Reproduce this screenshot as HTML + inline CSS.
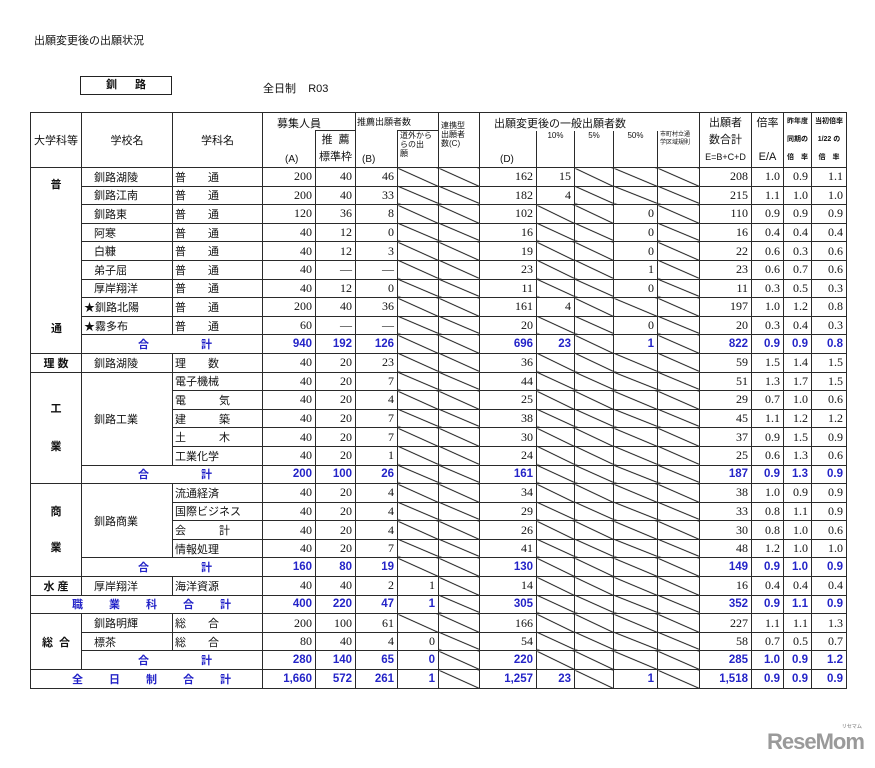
<!DOCTYPE html>
<html><head><meta charset="utf-8">
<style>
body{margin:0;background:#fff;width:875px;height:768px;position:relative;overflow:hidden;font-family:"Liberation Serif","Noto Serif CJK JP",serif;color:#111}
.title{position:absolute;left:34px;top:32px;font-size:11px;font-family:"Liberation Sans","Noto Sans CJK JP",sans-serif}
.box{position:absolute;left:80px;top:76px;width:90px;height:17px;border:1px solid #222;font-size:11px;font-weight:bold;text-align:center;line-height:17px;font-family:"Liberation Sans","Noto Sans CJK JP",sans-serif;letter-spacing:18px;text-indent:18px}
.sub{position:absolute;left:263px;top:80px;font-size:11px;font-family:"Liberation Sans","Noto Sans CJK JP",sans-serif}
.logo{position:absolute;left:767px;top:729px;font:bold 22px "Liberation Sans",sans-serif;color:#9a9a9a;letter-spacing:-1px}
.logo small{position:absolute;right:2px;top:-6px;font-size:5px;letter-spacing:0}
table{position:absolute;left:30px;top:112px;border-collapse:collapse;table-layout:fixed;width:816px;font-size:11px}
td,th{border:1px solid #2a2a2a;padding:0 2px;white-space:nowrap;overflow:visible;font-weight:normal}
tbody tr{height:18.6px}
th{font-family:"Liberation Sans","Noto Sans CJK JP",sans-serif;font-size:10px;position:relative;vertical-align:middle}
.n{text-align:right;font-size:12px;padding-right:3px}
.d{background:linear-gradient(to top right,transparent calc(50% - 0.9px),#000 50%,transparent calc(50% + 0.9px))}
.t td{color:#2424c8;font-weight:bold;font-family:"Liberation Sans","Noto Sans CJK JP",sans-serif}
.t td.n{font-size:11.5px}
.j{font-family:"Liberation Sans","Noto Sans CJK JP",sans-serif;font-size:11px}
.c1{text-align:center;font-weight:bold;font-family:"Liberation Sans","Noto Sans CJK JP",sans-serif;font-size:11px}
.sc{padding-left:12px}
.ab{position:absolute;white-space:nowrap}
.sm{font-size:8px;line-height:9px}
.g{padding-left:56px}
.g span{padding-left:52px}
.w{padding-left:41px}
.w span{padding-left:26px}
</style></head><body>
<div class="title">出願変更後の出願状況</div>
<div class="box">釧路</div>
<div class="sub">全日制&nbsp;&nbsp;&nbsp;&nbsp;R03</div>
<div class="logo">ReseMom<small>リセマム</small></div>
<table>
<colgroup><col style="width:51px"><col style="width:91px"><col style="width:90px"><col style="width:53px"><col style="width:40px"><col style="width:42px"><col style="width:41px"><col style="width:41px"><col style="width:57px"><col style="width:38px"><col style="width:39px"><col style="width:44px"><col style="width:42px"><col style="width:52px"><col style="width:32px"><col style="width:28px"><col style="width:35px"></colgroup>
<thead>
<tr style="height:18px">
<th rowspan="2" style="font-size:11px">大学科等</th>
<th rowspan="2" style="font-size:11px">学校名</th>
<th rowspan="2" style="font-size:11px">学科名</th>
<th rowspan="2" style="border-right:none"><span class="ab" style="left:14px;top:2px;font-size:11px">募集人員</span><span class="ab" style="left:22px;bottom:2px">(A)</span></th>
<th style="border-left:none"></th>
<th rowspan="2" style="border-right:none"><span class="ab" style="left:1px;top:2px;font-size:9px">推薦出願者数</span><span class="ab" style="left:6px;bottom:2px">(B)</span></th>
<th style="border-left:none"></th>
<th rowspan="2" style="vertical-align:top;text-align:left"><div class="sm" style="margin-top:8px">連携型<br>出願者<br>数(C)</div></th>
<th rowspan="2" style="border-right:none"><span class="ab" style="left:14px;top:2px;font-size:11px">出願変更後の一般出願者数</span><span class="ab" style="left:20px;bottom:2px">(D)</span></th>
<th style="border:none;border-top:1px solid #2a2a2a"></th>
<th style="border:none;border-top:1px solid #2a2a2a"></th>
<th style="border:none;border-top:1px solid #2a2a2a"></th>
<th style="border-left:none;border-bottom:none"></th>
<th rowspan="2" style="font-size:11px;line-height:17px">出願者<br>数合計<br><span style="font-size:9px">E=B+C+D</span></th>
<th rowspan="2" style="font-size:11px;vertical-align:top;line-height:17px;padding-top:2px">倍率<br><br>E/A</th>
<th rowspan="2" class="sm" style="font-size:7px;line-height:18px;padding:0;font-weight:bold">昨年度<br>同期の<br>倍　率</th>
<th rowspan="2" class="sm" style="font-size:7px;line-height:18px;padding:0;font-weight:bold">当初倍率<br>1/22 の<br>倍　率</th>
</tr>
<tr style="height:37px">
<th style="font-size:11px;line-height:17px">推&nbsp;&nbsp;薦<br>標準枠</th>
<th style="text-align:left;vertical-align:top"><div class="sm">道外から<br>らの出<br>願</div></th>
<th style="vertical-align:top;font-size:8px;border-top:none">10%</th>
<th style="vertical-align:top;font-size:8px;border-top:none">5%</th>
<th style="vertical-align:top;font-size:8px;border-top:none">50%</th>
<th style="vertical-align:top;font-size:6px;line-height:8px;text-align:left;border-top:none">市町村立通<br>学区域規則</th>
</tr>
</thead>
<tbody>
<tr><td rowspan="10" class="c1" style="vertical-align:top;padding-top:8px;position:relative">普<span class="ab" style="left:20px;top:152px">通</span></td><td class="sc j">釧路湖陵</td><td class="j">普&emsp;&emsp;通</td><td class="n">200</td><td class="n">40</td><td class="n">46</td><td class="d"></td><td class="d"></td><td class="n">162</td><td class="n">15</td><td class="d"></td><td class="d"></td><td class="d"></td><td class="n">208</td><td class="n">1.0</td><td class="n">0.9</td><td class="n">1.1</td></tr>
<tr><td class="sc j">釧路江南</td><td class="j">普&emsp;&emsp;通</td><td class="n">200</td><td class="n">40</td><td class="n">33</td><td class="d"></td><td class="d"></td><td class="n">182</td><td class="n">4</td><td class="d"></td><td class="d"></td><td class="d"></td><td class="n">215</td><td class="n">1.1</td><td class="n">1.0</td><td class="n">1.0</td></tr>
<tr><td class="sc j">釧路東</td><td class="j">普&emsp;&emsp;通</td><td class="n">120</td><td class="n">36</td><td class="n">8</td><td class="d"></td><td class="d"></td><td class="n">102</td><td class="d"></td><td class="d"></td><td class="n">0</td><td class="d"></td><td class="n">110</td><td class="n">0.9</td><td class="n">0.9</td><td class="n">0.9</td></tr>
<tr><td class="sc j">阿寒</td><td class="j">普&emsp;&emsp;通</td><td class="n">40</td><td class="n">12</td><td class="n">0</td><td class="d"></td><td class="d"></td><td class="n">16</td><td class="d"></td><td class="d"></td><td class="n">0</td><td class="d"></td><td class="n">16</td><td class="n">0.4</td><td class="n">0.4</td><td class="n">0.4</td></tr>
<tr><td class="sc j">白糠</td><td class="j">普&emsp;&emsp;通</td><td class="n">40</td><td class="n">12</td><td class="n">3</td><td class="d"></td><td class="d"></td><td class="n">19</td><td class="d"></td><td class="d"></td><td class="n">0</td><td class="d"></td><td class="n">22</td><td class="n">0.6</td><td class="n">0.3</td><td class="n">0.6</td></tr>
<tr><td class="sc j">弟子屈</td><td class="j">普&emsp;&emsp;通</td><td class="n">40</td><td class="n">―</td><td class="n">―</td><td class="d"></td><td class="d"></td><td class="n">23</td><td class="d"></td><td class="d"></td><td class="n">1</td><td class="d"></td><td class="n">23</td><td class="n">0.6</td><td class="n">0.7</td><td class="n">0.6</td></tr>
<tr><td class="sc j">厚岸翔洋</td><td class="j">普&emsp;&emsp;通</td><td class="n">40</td><td class="n">12</td><td class="n">0</td><td class="d"></td><td class="d"></td><td class="n">11</td><td class="d"></td><td class="d"></td><td class="n">0</td><td class="d"></td><td class="n">11</td><td class="n">0.3</td><td class="n">0.5</td><td class="n">0.3</td></tr>
<tr><td class="j">★釧路北陽</td><td class="j">普&emsp;&emsp;通</td><td class="n">200</td><td class="n">40</td><td class="n">36</td><td class="d"></td><td class="d"></td><td class="n">161</td><td class="n">4</td><td class="d"></td><td class="d"></td><td class="d"></td><td class="n">197</td><td class="n">1.0</td><td class="n">1.2</td><td class="n">0.8</td></tr>
<tr><td class="j">★霧多布</td><td class="j">普&emsp;&emsp;通</td><td class="n">60</td><td class="n">―</td><td class="n">―</td><td class="d"></td><td class="d"></td><td class="n">20</td><td class="d"></td><td class="d"></td><td class="n">0</td><td class="d"></td><td class="n">20</td><td class="n">0.3</td><td class="n">0.4</td><td class="n">0.3</td></tr>
<tr class="t"><td colspan="2" class="g">合<span>計</span></td><td class="n">940</td><td class="n">192</td><td class="n">126</td><td class="d"></td><td class="d"></td><td class="n">696</td><td class="n">23</td><td class="d"></td><td class="n">1</td><td class="d"></td><td class="n">822</td><td class="n">0.9</td><td class="n">0.9</td><td class="n">0.8</td></tr>
<tr><td class="c1">理&nbsp;数</td><td class="sc j">釧路湖陵</td><td class="j">理&emsp;&emsp;数</td><td class="n">40</td><td class="n">20</td><td class="n">23</td><td class="d"></td><td class="d"></td><td class="n">36</td><td class="d"></td><td class="d"></td><td class="d"></td><td class="d"></td><td class="n">59</td><td class="n">1.5</td><td class="n">1.4</td><td class="n">1.5</td></tr>
<tr><td rowspan="6" class="c1" style="line-height:38px">工<br>業</td><td rowspan="5" class="sc j">釧路工業</td><td class="j">電子機械</td><td class="n">40</td><td class="n">20</td><td class="n">7</td><td class="d"></td><td class="d"></td><td class="n">44</td><td class="d"></td><td class="d"></td><td class="d"></td><td class="d"></td><td class="n">51</td><td class="n">1.3</td><td class="n">1.7</td><td class="n">1.5</td></tr>
<tr><td class="j">電&emsp;&emsp;&emsp;気</td><td class="n">40</td><td class="n">20</td><td class="n">4</td><td class="d"></td><td class="d"></td><td class="n">25</td><td class="d"></td><td class="d"></td><td class="d"></td><td class="d"></td><td class="n">29</td><td class="n">0.7</td><td class="n">1.0</td><td class="n">0.6</td></tr>
<tr><td class="j">建&emsp;&emsp;&emsp;築</td><td class="n">40</td><td class="n">20</td><td class="n">7</td><td class="d"></td><td class="d"></td><td class="n">38</td><td class="d"></td><td class="d"></td><td class="d"></td><td class="d"></td><td class="n">45</td><td class="n">1.1</td><td class="n">1.2</td><td class="n">1.2</td></tr>
<tr><td class="j">土&emsp;&emsp;&emsp;木</td><td class="n">40</td><td class="n">20</td><td class="n">7</td><td class="d"></td><td class="d"></td><td class="n">30</td><td class="d"></td><td class="d"></td><td class="d"></td><td class="d"></td><td class="n">37</td><td class="n">0.9</td><td class="n">1.5</td><td class="n">0.9</td></tr>
<tr><td class="j">工業化学</td><td class="n">40</td><td class="n">20</td><td class="n">1</td><td class="d"></td><td class="d"></td><td class="n">24</td><td class="d"></td><td class="d"></td><td class="d"></td><td class="d"></td><td class="n">25</td><td class="n">0.6</td><td class="n">1.3</td><td class="n">0.6</td></tr>
<tr class="t"><td colspan="2" class="g">合<span>計</span></td><td class="n">200</td><td class="n">100</td><td class="n">26</td><td class="d"></td><td class="d"></td><td class="n">161</td><td class="d"></td><td class="d"></td><td class="d"></td><td class="d"></td><td class="n">187</td><td class="n">0.9</td><td class="n">1.3</td><td class="n">0.9</td></tr>
<tr><td rowspan="5" class="c1" style="line-height:36px">商<br>業</td><td rowspan="4" class="sc j">釧路商業</td><td class="j">流通経済</td><td class="n">40</td><td class="n">20</td><td class="n">4</td><td class="d"></td><td class="d"></td><td class="n">34</td><td class="d"></td><td class="d"></td><td class="d"></td><td class="d"></td><td class="n">38</td><td class="n">1.0</td><td class="n">0.9</td><td class="n">0.9</td></tr>
<tr><td class="j">国際ビジネス</td><td class="n">40</td><td class="n">20</td><td class="n">4</td><td class="d"></td><td class="d"></td><td class="n">29</td><td class="d"></td><td class="d"></td><td class="d"></td><td class="d"></td><td class="n">33</td><td class="n">0.8</td><td class="n">1.1</td><td class="n">0.9</td></tr>
<tr><td class="j">会&emsp;&emsp;&emsp;計</td><td class="n">40</td><td class="n">20</td><td class="n">4</td><td class="d"></td><td class="d"></td><td class="n">26</td><td class="d"></td><td class="d"></td><td class="d"></td><td class="d"></td><td class="n">30</td><td class="n">0.8</td><td class="n">1.0</td><td class="n">0.6</td></tr>
<tr><td class="j">情報処理</td><td class="n">40</td><td class="n">20</td><td class="n">7</td><td class="d"></td><td class="d"></td><td class="n">41</td><td class="d"></td><td class="d"></td><td class="d"></td><td class="d"></td><td class="n">48</td><td class="n">1.2</td><td class="n">1.0</td><td class="n">1.0</td></tr>
<tr class="t"><td colspan="2" class="g">合<span>計</span></td><td class="n">160</td><td class="n">80</td><td class="n">19</td><td class="d"></td><td class="d"></td><td class="n">130</td><td class="d"></td><td class="d"></td><td class="d"></td><td class="d"></td><td class="n">149</td><td class="n">0.9</td><td class="n">1.0</td><td class="n">0.9</td></tr>
<tr><td class="c1">水&nbsp;産</td><td class="sc j">厚岸翔洋</td><td class="j">海洋資源</td><td class="n">40</td><td class="n">40</td><td class="n">2</td><td class="n">1</td><td class="d"></td><td class="n">14</td><td class="d"></td><td class="d"></td><td class="d"></td><td class="d"></td><td class="n">16</td><td class="n">0.4</td><td class="n">0.4</td><td class="n">0.4</td></tr>
<tr class="t"><td colspan="3" class="w">職<span>業</span><span>科</span><span>合</span><span>計</span></td><td class="n">400</td><td class="n">220</td><td class="n">47</td><td class="n">1</td><td class="d"></td><td class="n">305</td><td class="d"></td><td class="d"></td><td class="d"></td><td class="d"></td><td class="n">352</td><td class="n">0.9</td><td class="n">1.1</td><td class="n">0.9</td></tr>
<tr><td rowspan="3" class="c1">総&nbsp;&nbsp;合</td><td class="sc j">釧路明輝</td><td class="j">総&emsp;&emsp;合</td><td class="n">200</td><td class="n">100</td><td class="n">61</td><td class="d"></td><td class="d"></td><td class="n">166</td><td class="d"></td><td class="d"></td><td class="d"></td><td class="d"></td><td class="n">227</td><td class="n">1.1</td><td class="n">1.1</td><td class="n">1.3</td></tr>
<tr><td class="sc j">標茶</td><td class="j">総&emsp;&emsp;合</td><td class="n">80</td><td class="n">40</td><td class="n">4</td><td class="n">0</td><td class="d"></td><td class="n">54</td><td class="d"></td><td class="d"></td><td class="d"></td><td class="d"></td><td class="n">58</td><td class="n">0.7</td><td class="n">0.5</td><td class="n">0.7</td></tr>
<tr class="t"><td colspan="2" class="g">合<span>計</span></td><td class="n">280</td><td class="n">140</td><td class="n">65</td><td class="n">0</td><td class="d"></td><td class="n">220</td><td class="d"></td><td class="d"></td><td class="d"></td><td class="d"></td><td class="n">285</td><td class="n">1.0</td><td class="n">0.9</td><td class="n">1.2</td></tr>
<tr class="t"><td colspan="3" class="w">全<span>日</span><span>制</span><span>合</span><span>計</span></td><td class="n">1,660</td><td class="n">572</td><td class="n">261</td><td class="n">1</td><td class="d"></td><td class="n">1,257</td><td class="n">23</td><td class="d"></td><td class="n">1</td><td class="d"></td><td class="n">1,518</td><td class="n">0.9</td><td class="n">0.9</td><td class="n">0.9</td></tr>
</tbody>
</table>
</body></html>
